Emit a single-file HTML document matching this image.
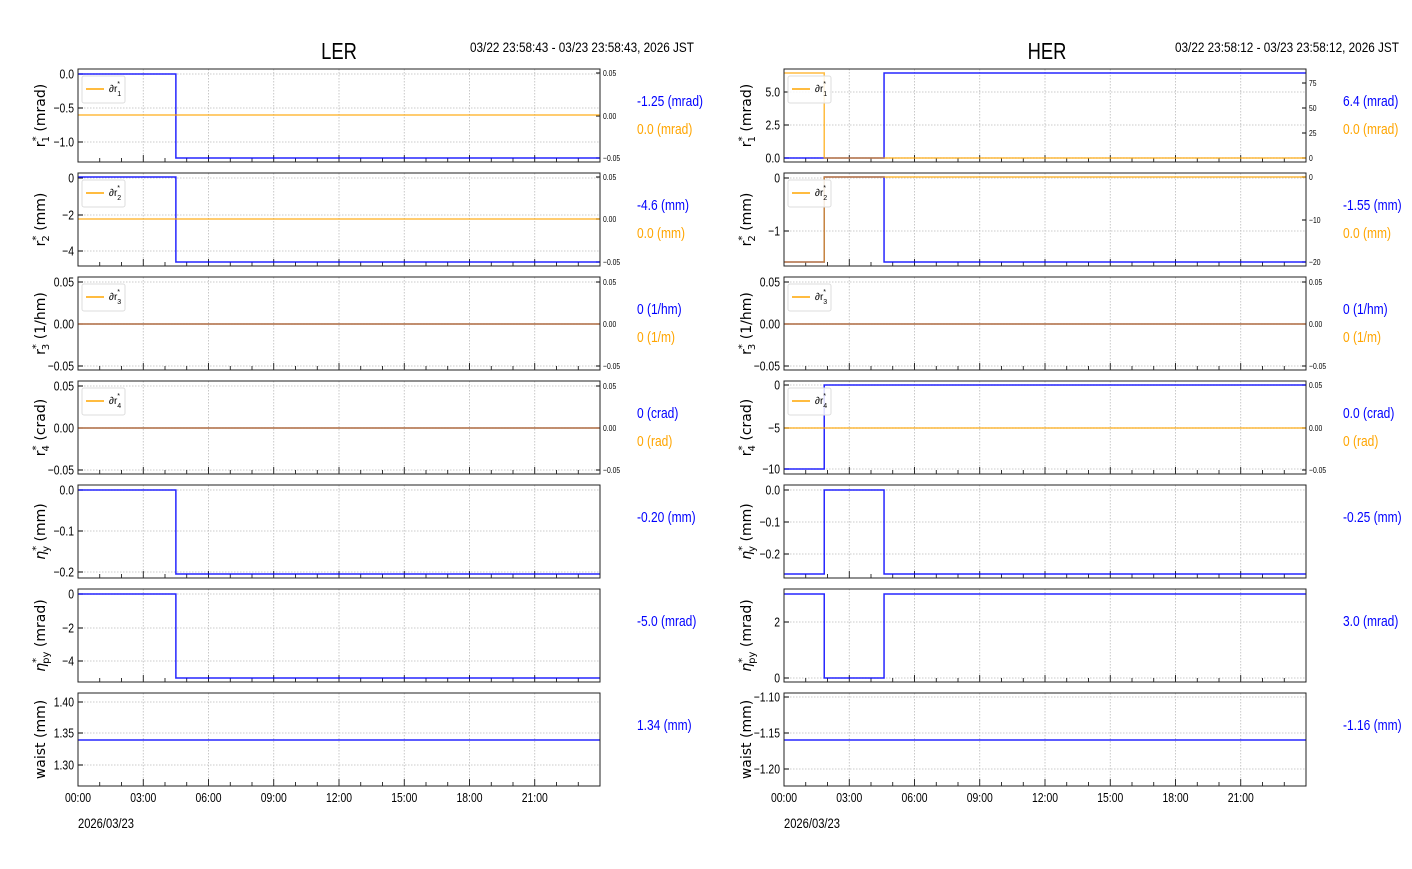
<!DOCTYPE html><html><head><meta charset="utf-8"><style>
body{margin:0;background:#fff;width:1412px;height:864px;overflow:hidden}
svg text{font-family:"Liberation Sans",sans-serif}
</style></head><body>
<svg id="s" width="1412" height="864" xmlns="http://www.w3.org/2000/svg">
<text transform="translate(339 59) scale(0.8 1)" font-size="23" text-anchor="middle">LER</text>
<text transform="translate(470 52) scale(0.84 1)" font-size="14">03/22 23:58:43 - 03/23 23:58:43, 2026 JST</text>
<text transform="translate(1047 59) scale(0.8 1)" font-size="23" text-anchor="middle">HER</text>
<text transform="translate(1175 52) scale(0.84 1)" font-size="14">03/22 23:58:12 - 03/23 23:58:12, 2026 JST</text>
</svg>
<script>
const S=document.getElementById('s');let h='';
const B='#0000ff',O='#ffa500';
const T=(x,y,fs,c,a,f)=>`<text transform="translate(${x} ${y}) scale(0.8 1)" font-size="${fs}"${a?` text-anchor="${a}"`:''}${f?` fill="${f}"`:''}>${c}</text>`;
const tops=[69,173,277,381,485,589,693],H=93,W=522;
const ylab=[['r','1','(mrad)'],['r','2','(mm)'],['r','3','(1/hm)'],['r','4','(crad)'],['η','y','(mm)'],['η','py','(mrad)'],['waist','','(mm)']];
function panel(x0,cfg){
 for(let r=0;r<7;r++){
  const t=tops[r],c=cfg[r];
  for(let k=1;k<8;k++){const x=x0+k*65.25;h+=`<line x1="${x}" y1="${t}" x2="${x}" y2="${t+H}" stroke="#bbb" stroke-width="0.8" stroke-dasharray="1.5,1.5"/>`;}
  c.yt.forEach(([y,l])=>{h+=`<line x1="${x0}" y1="${y}" x2="${x0+W}" y2="${y}" stroke="#bbb" stroke-width="0.8" stroke-dasharray="1.5,1.5"/><line x1="${x0}" y1="${y}" x2="${x0+5}" y2="${y}" stroke="#000"/>`+T(x0-4,y+4.5,13,l,'end');});
  for(let k=1;k<24;k++){const x=x0+k*21.75;h+=`<line x1="${x}" y1="${t+H}" x2="${x}" y2="${t+H-(k%3?4:7)}" stroke="#000" stroke-width="0.8"/>`;}
  if(c.rt)c.rt.forEach(([y,l])=>{h+=`<line x1="${x0+W}" y1="${y}" x2="${x0+W-4}" y2="${y}" stroke="#000"/>`+T(x0+W+3,y+3,8.5,l);});
  const P=a=>a.map(([x,y],i)=>(i?'L':'M')+(x0+x*21.75)+','+y).join('');
  h+=`<path d="${P(c.b)}" fill="none" stroke="${B}" stroke-width="1.5" opacity="0.85"/>`;
  if(c.o)h+=`<path d="${P(c.o)}" fill="none" stroke="${O}" stroke-width="1.5" opacity="0.75"/>`;
  h+=`<rect x="${x0}" y="${t}" width="${W}" height="${H}" fill="none" stroke="#222" stroke-width="1"/>`;
  if(r<4){h+=`<rect x="${x0+4}" y="${t+7}" width="43" height="27" rx="2" fill="#fff" fill-opacity="0.85" stroke="#ddd"/><line x1="${x0+8}" y1="${t+20}" x2="${x0+26}" y2="${t+20}" stroke="${O}" stroke-width="1.5"/><text x="${x0+31}" y="${t+23}" font-size="10">∂r<tspan dy="4" font-size="7">${r+1}</tspan><tspan dy="-10" dx="-4" font-size="7">*</tspan></text>`;}
  const L=ylab[r],cy=t+H/2,lx=x0-33;
  let lt=L[1]?`${L[0]==='η'?'<tspan font-style="italic">η</tspan>':L[0]}<tspan font-size="10" dy="-6">*</tspan><tspan font-size="10" dy="10" dx="-6">${L[1]}</tspan><tspan dy="-4"> ${L[2]}</tspan>`:`waist ${L[2]}`;
  h+=`<text style="font-family:'DejaVu Sans',sans-serif;font-size:14px" transform="translate(${lx} ${cy}) rotate(-90)" text-anchor="middle">${lt}</text>`;
  h+=T(x0+559,t+37,15,c.v[0],'',B);
  if(c.v[1])h+=T(x0+559,t+65,15,c.v[1],'',O);
 }
 ['00:00','03:00','06:00','09:00','12:00','15:00','18:00','21:00'].forEach((l,k)=>{h+=T(x0+k*65.25,802,13,l,'middle');});
 h+=T(x0,828,14,'2026/03/23');
}
const r3=[[282,'0.05'],[324,'0.00'],[366,'−0.05']];
const rs=(a,b,c)=>[[a,'0.05'],[b,'0.00'],[c,'−0.05']];
panel(78,[
 {yt:[[74,'0.0'],[108,'−0.5'],[142,'−1.0']],rt:rs(73,116,158),b:[[0,74],[4.5,74],[4.5,158],[24,158]],o:[[0,115],[24,115]],v:['-1.25 (mrad)','0.0 (mrad)']},
 {yt:[[178,'0'],[215,'−2'],[251,'−4']],rt:rs(177,219,262),b:[[0,177],[4.5,177],[4.5,262],[24,262]],o:[[0,219],[24,219]],v:['-4.6 (mm)','0.0 (mm)']},
 {yt:r3,rt:r3,b:[[0,324],[24,324]],o:[[0,324],[24,324]],v:['0 (1/hm)','0 (1/m)']},
 {yt:rs(386,428,470),rt:rs(386,428,470),b:[[0,428],[24,428]],o:[[0,428],[24,428]],v:['0 (crad)','0 (rad)']},
 {yt:[[490,'0.0'],[531,'−0.1'],[572,'−0.2']],b:[[0,490],[4.5,490],[4.5,574],[24,574]],v:['-0.20 (mm)']},
 {yt:[[594,'0'],[628,'−2'],[661,'−4']],b:[[0,594],[4.5,594],[4.5,678],[24,678]],v:['-5.0 (mrad)']},
 {yt:[[702,'1.40'],[733,'1.35'],[765,'1.30']],b:[[0,740],[24,740]],v:['1.34 (mm)']}
]);
panel(784,[
 {yt:[[92,'5.0'],[125,'2.5'],[158,'0.0']],rt:[[83,'75'],[108,'50'],[133,'25'],[158,'0']],b:[[0,158],[4.6,158],[4.6,73],[24,73]],o:[[0,73],[1.85,73],[1.85,158],[24,158]],v:['6.4 (mrad)','0.0 (mrad)']},
 {yt:[[178,'0'],[231,'−1']],rt:[[177,'0'],[220,'−10'],[262,'−20']],b:[[0,262],[1.85,262],[1.85,177],[4.6,177],[4.6,262],[24,262]],o:[[0,262],[1.85,262],[1.85,177],[24,177]],v:['-1.55 (mm)','0.0 (mm)']},
 {yt:r3,rt:r3,b:[[0,324],[24,324]],o:[[0,324],[24,324]],v:['0 (1/hm)','0 (1/m)']},
 {yt:[[385,'0'],[428,'−5'],[469,'−10']],rt:rs(385,428,470),b:[[0,469],[1.85,469],[1.85,385],[24,385]],o:[[0,428],[24,428]],v:['0.0 (crad)','0 (rad)']},
 {yt:[[490,'0.0'],[522,'−0.1'],[554,'−0.2']],b:[[0,574],[1.85,574],[1.85,490],[4.6,490],[4.6,574],[24,574]],v:['-0.25 (mm)']},
 {yt:[[622,'2'],[678,'0']],b:[[0,594],[1.85,594],[1.85,678],[4.6,678],[4.6,594],[24,594]],v:['3.0 (mrad)']},
 {yt:[[697,'−1.10'],[733,'−1.15'],[769,'−1.20']],b:[[0,740],[24,740]],v:['-1.16 (mm)']}
]);
S.insertAdjacentHTML('beforeend',h);
</script>
</body></html>
